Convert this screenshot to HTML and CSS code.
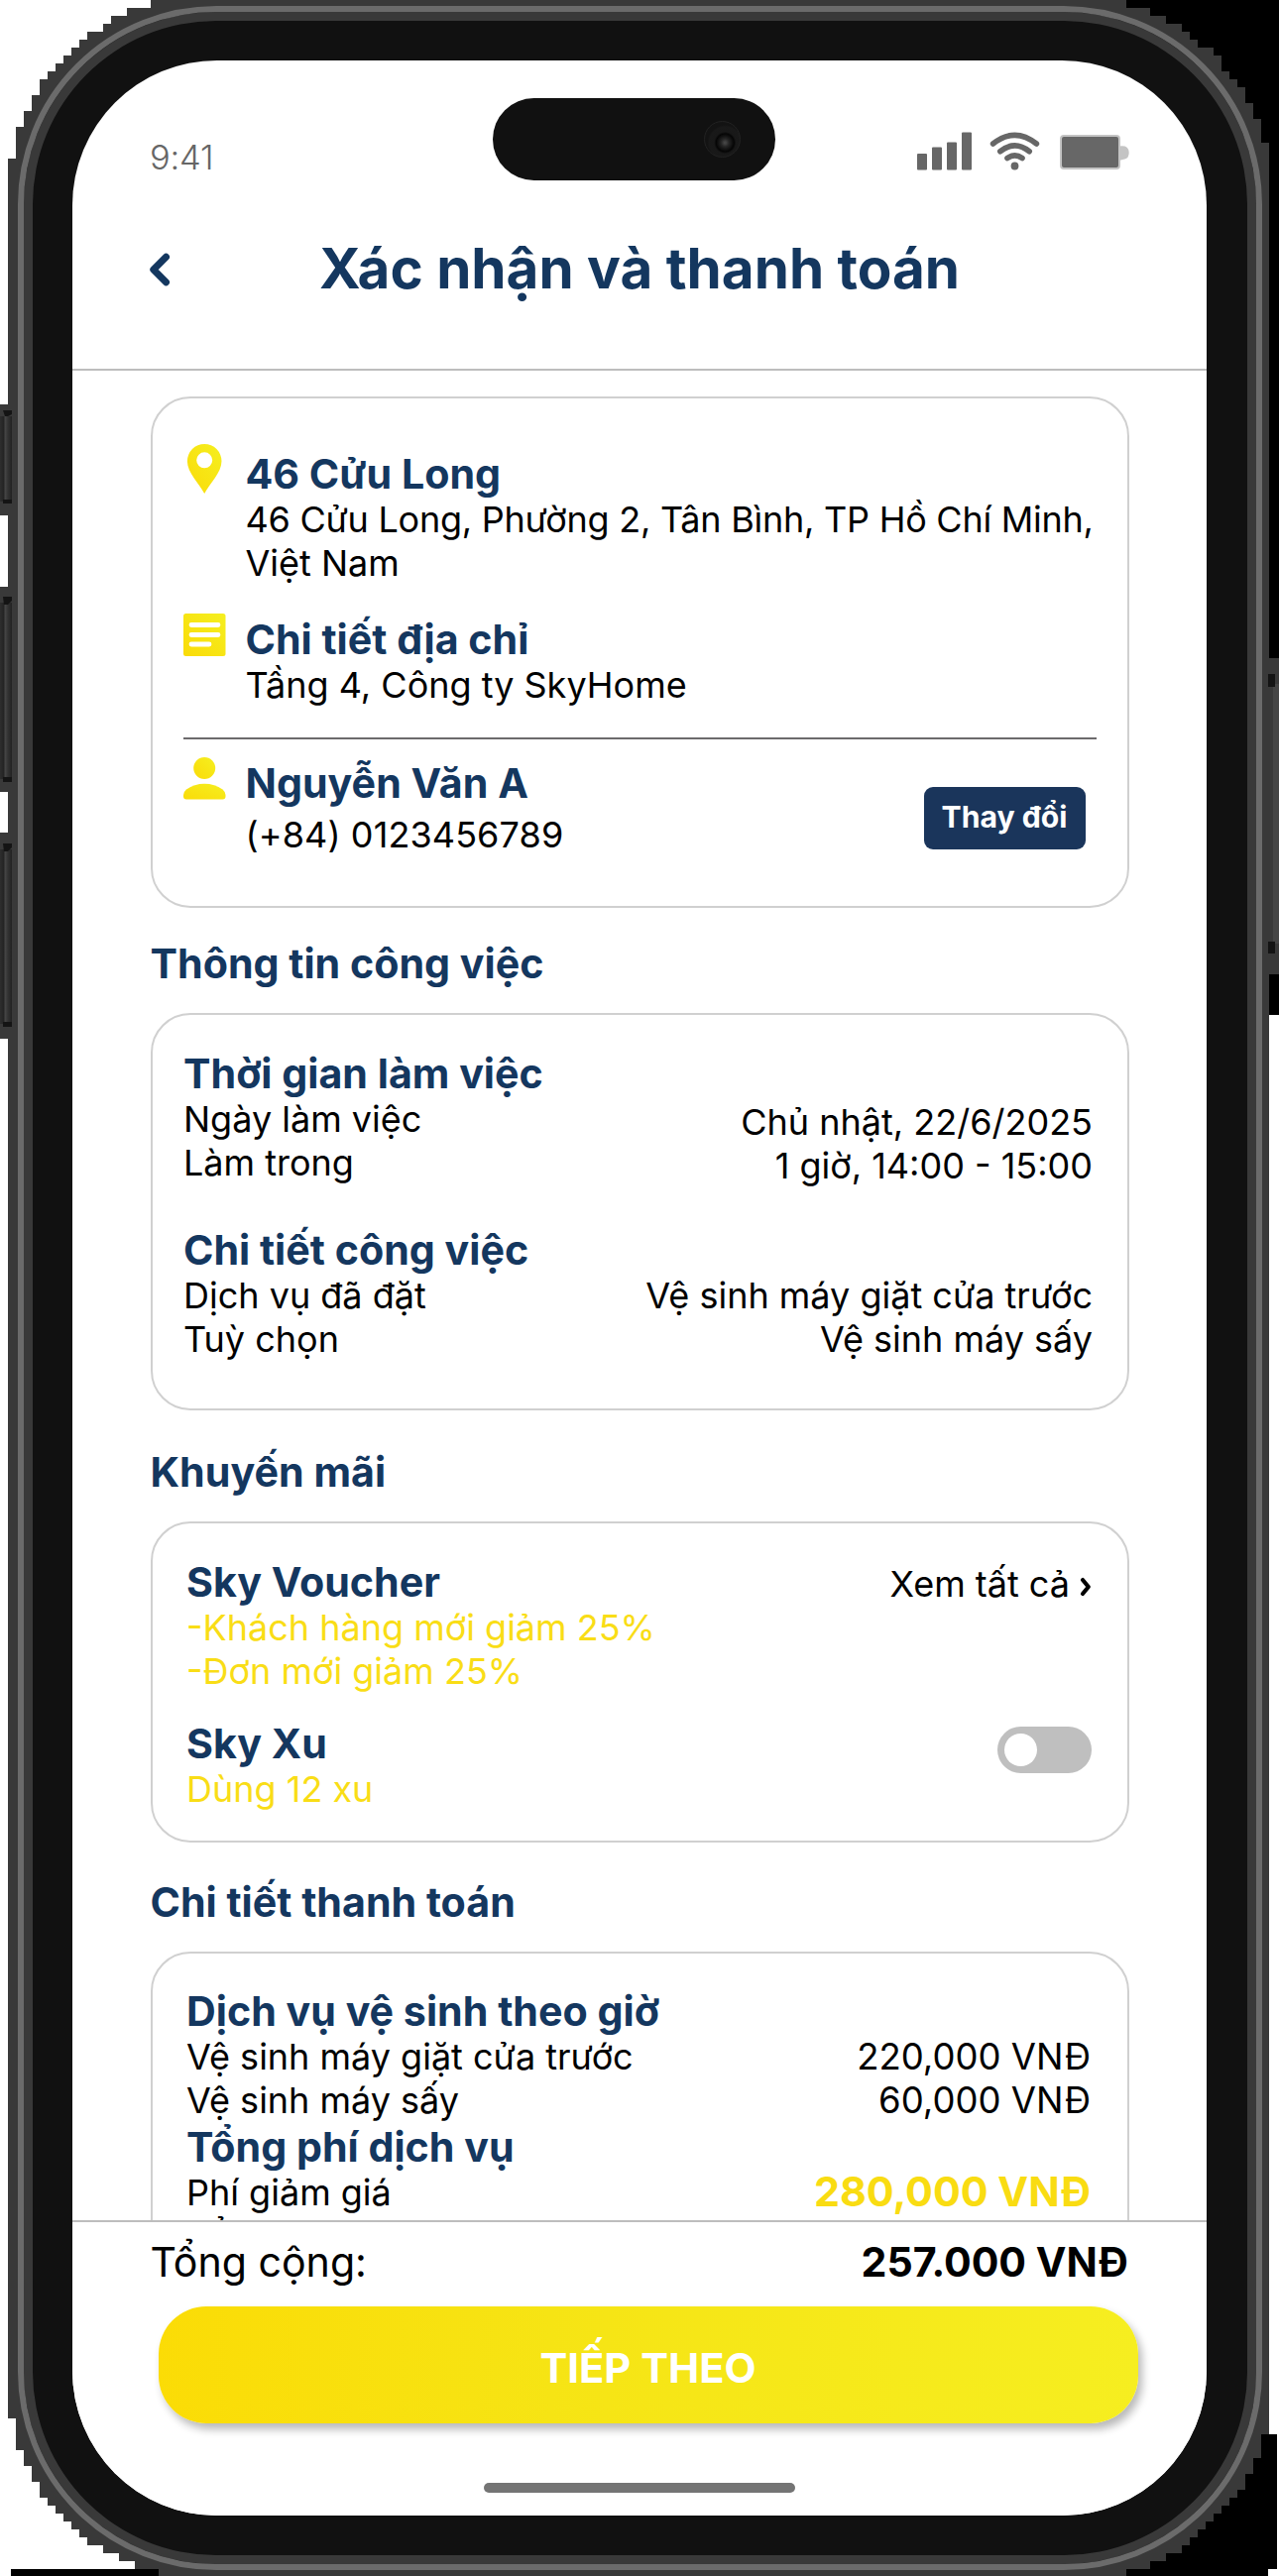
FILE: index.html
```html
<!DOCTYPE html>
<html lang="vi">
<head>
<meta charset="utf-8">
<title>Xác nhận và thanh toán</title>
<link rel="stylesheet" href="styles.css">
</head>
<body>
<svg class="backdrop" viewBox="0 0 1290 2599" width="1290" height="2599" aria-hidden="true">
  <defs>
    <linearGradient id="key" x1="0" x2="1" y1="0" y2="0">
      <stop offset="0" stop-color="#2e2e2e"/><stop offset=".3" stop-color="#242424"/><stop offset=".45" stop-color="#444"/><stop offset=".65" stop-color="#333"/><stop offset="1" stop-color="#222"/>
    </linearGradient>
  </defs>
  <rect width="1290" height="2599" fill="#fff"/>
  <path fill="#000" d="M1136 0H1290V1024H1256V300L1136 100zM1240 2456H1288V2592H1279V2599H1100V2500zM11 2592H160V2599H11z"/>
  <g shape-rendering="crispEdges" fill="#393939">
    <path d="M152 0H1136V8H1160V16H1176V24H1192V32H1200V40H1208V48H1224V56H1232V72H1240V80H1248V88H1256V104H1264V120H1272V144H1280V2456H1272V2480H1264V2496H1256V2512H1248V2520H1240V2528H1232V2536H1224V2544H1216V2552H1208V2560H1200V2568H1192V2576H1176V2584H1160V2592H1136V2599H160V2592H136V2584H120V2576H104V2568H88V2560H80V2552H72V2544H64V2536H56V2528H48V2520H40V2504H32V2488H24V2472H16V2440H8V160H16V128H24V112H32V96H40V80H48V72H56V64H64V56H72V48H80V40H88V32H104V24H112V16H128V8H152z"/>
    <path d="M0 408H12V520H0zM0 592H12V799H0zM0 840H12V1048H0zM1278 664H1290V983H1278z"/>
  </g>
  <g fill="url(#key)">
    <rect x="0" y="420" width="12" height="86"/><rect x="0" y="608" width="12" height="178"/><rect x="0" y="857" width="12" height="176"/>
  </g>
  <rect x="1284" y="690" width="6" height="262" fill="#454545"/>
  <path fill="#141414" d="M3 414H12V418L8 420H5zM3 508H12V504H3zM3 602H12V606L8 610H4zM3 789H12V784H3zM3 851H12V855L8 859H4zM3 1036H12V1031H3zM1279 680H1286V693H1279zM1279 950H1286V962H1279z"/>
</svg>
<div class="bezel">
<div class="screen">
  <header class="top">
    <div class="status">
      <span class="clock">9:41</span>
      <svg class="indicators" viewBox="0 0 216 40" width="216" height="40" fill="#676767">
        <rect x="2" y="22" width="10" height="16.5" rx="1"/><rect x="17" y="15.500" width="10" height="23" rx="1"/><rect x="32" y="10.500" width="10" height="28" rx="1"/><rect x="47" y="0.500" width="10" height="38" rx="1"/>
        <g fill="none" stroke="#676767" stroke-width="5.600" stroke-linecap="round">
          <path d="M78.600 12Q100.500-5.400 122.400 12M85.800 19.700Q100.500 8 115.200 19.700M93 26.600Q100.500 21 108 26.600"/>
        </g>
        <circle cx="100.500" cy="34.500" r="3.900"/>
        <path d="M206 14.500Q208 14 211.500 14.500Q215.700 16 215.700 21Q215.700 26.500 211.500 27.500Q208 28 206 29z" fill="#c4c4c4"/>
        <rect x="147" y="4" width="59" height="33" rx="3" stroke="#c4c4c4" stroke-width="2"/>
      </svg>
      <div class="island"><i class="lens"></i></div>
    </div>
    <div class="nav">
      <svg class="back" viewBox="0 0 24 36" width="24" height="36"><path d="M18.500 5.200L5.800 18L18.500 30.800" fill="none" stroke="#14375f" stroke-width="7" stroke-linecap="round" stroke-linejoin="round"/></svg>
      <h1>Xác nhận và thanh toán</h1>
    </div>
  </header>

  <main class="content">
    <section class="card address">
      <svg width="0" height="0" class="defs"><defs><linearGradient id="sun" x1="0" y1="1" x2="1" y2="0"><stop offset="0" stop-color="#fadb08"/><stop offset="1" stop-color="#f5ef20"/></linearGradient></defs></svg>
      <div class="entry">
        <svg class="ico pin" viewBox="0 0 43 52" width="43" height="52"><path fill="url(#sun)" fill-rule="evenodd" d="M21.200 1A17.300 17.300 0 0 0 3.900 18.300C3.900 30 16 41 21.200 51C26.400 41 38.500 30 38.500 18.300A17.300 17.300 0 0 0 21.200 1zM21.200 9.300A8 8 0 1 1 21.200 25.300A8 8 0 1 1 21.200 9.300z"/></svg>
        <div><h3>46 Cửu Long</h3><p class="street">46 Cửu Long, Phường 2, Tân Bình, TP Hồ Chí Minh,</p><p>Việt Nam</p></div>
      </div>
      <div class="entry detail">
        <svg class="ico note" viewBox="0 0 43 43" width="43" height="43"><rect width="42.500" height="43" rx="2.500" fill="url(#sun)"/><path d="M8 11.500H35M8 21.500H35M8 31H26" stroke="#fff" stroke-width="4.800" stroke-linecap="round"/></svg>
        <div><h3>Chi tiết địa chỉ</h3><p>Tầng 4, Công ty SkyHome</p></div>
      </div>
      <hr>
      <div class="entry person">
        <svg class="ico user" viewBox="0 0 43 43" width="43" height="43" fill="url(#sun)"><circle cx="21.200" cy="11" r="11"/><path d="M0 38Q0 35 3 32.500Q11 26.800 21.200 26.800Q31.500 26.800 39.500 32.500Q42.500 35 42.500 38V39.500Q42.500 42.500 39.500 42.500H3Q0 42.500 0 39.500z"/></svg>
        <div class="who"><h3>Nguyễn Văn A</h3><p class="phone">(+84) 0123456789</p></div>
        <button class="change">Thay đổi</button>
      </div>
    </section>

    <h2>Thông tin công việc</h2>
    <section class="card job">
      <h3>Thời gian làm việc</h3>
      <div class="cols"><p>Ngày làm việc<br>Làm trong</p><p class="val low">Chủ nhật, 22/6/2025<br>1 giờ, 14:00 - 15:00</p></div>
      <h3 class="second">Chi tiết công việc</h3>
      <div class="cols"><p>Dịch vụ đã đặt<br>Tuỳ chọn</p><p class="val">Vệ sinh máy giặt cửa trước<br>Vệ sinh máy sấy</p></div>
    </section>

    <h2 class="promo-title">Khuyến mãi</h2>
    <section class="card promo">
      <div class="cols">
        <div><h3>Sky Voucher</h3><p class="gold">-Khách hàng mới giảm 25%<br>-Đơn mới giảm 25%</p></div>
        <a class="all">Xem tất cả<svg viewBox="0 0 12 20" width="12" height="20"><path d="M3 3L8.800 10L3 17" fill="none" stroke="#000" stroke-width="4.200" stroke-linecap="round" stroke-linejoin="round"/></svg></a>
      </div>
      <div class="cols coins">
        <div><h3>Sky Xu</h3><p class="gold">Dùng 12 xu</p></div>
        <span class="toggle"><i></i></span>
      </div>
    </section>

    <h2 class="bill-title">Chi tiết thanh toán</h2>
    <section class="card bill">
      <h3>Dịch vụ vệ sinh theo giờ</h3>
      <div class="cols"><p>Vệ sinh máy giặt cửa trước<br>Vệ sinh máy sấy</p><p class="val money">220,000 VNĐ<br>60,000 VNĐ</p></div>
      <h3 class="fee">Tổng phí dịch vụ</h3>
      <div class="cols sum"><p>Phí giảm giá<br>Tổng</p><strong>280,000 VNĐ</strong></div>
    </section>
  </main>

  <footer class="pay">
    <div class="total"><span>Tổng cộng:</span><b>257.000 VNĐ</b></div>
    <button class="next">TIẾP THEO</button>
    <div class="home"></div>
  </footer>
</div>
</div>
</body>
</html>
```
FILE: styles.css
```css
* { box-sizing: border-box; margin: 0; padding: 0; }
body {
  width: 1290px;
  height: 2599px;
  overflow: hidden;
  padding: 6px 17px 6px 17.500px;
  font-family: Inter, "Liberation Sans", sans-serif;
  font-size: 36px;
  font-weight: 430;
  line-height: 44px;
  color: #000;
  position: relative;
}
.backdrop { position: absolute; left: 0; top: 0; z-index: -1; }

/* metal ring, dark inner ring and black bezel around the screen */
.bezel {
  width: 1255.500px;
  height: 2587px;
  border: 6px solid #6b6b6b;
  border-radius: 200px;
  background: #111;
  box-shadow: inset 0 0 0 9px #393939;
  padding: 49px 49.500px;
}
.screen {
  width: 1144px;
  height: 2477px;
  border-radius: 146px;
  background: #fff;
  overflow: hidden;
  display: flex;
  flex-direction: column;
}

.top { height: 313px; border-bottom: 2px solid #bdbdbd; flex: none; }
.status {
  position: relative;
  height: 144px;
  padding: 72px 78px 0 78px;
  display: flex;
  justify-content: space-between;
}
.clock { font-weight: 330; font-size: 34.500px; line-height: 40px; color: #666; padding-top: 6px; letter-spacing: -0.200px; }
.indicators { display: block; }
.island {
  position: absolute;
  left: 424px;
  top: 38px;
  width: 284.500px;
  height: 83px;
  border-radius: 42px;
  background: #111;
}
.lens {
  position: absolute;
  left: 213px;
  top: 23px;
  width: 37px;
  height: 37px;
  border-radius: 50%;
  border: 1px solid #222;
  background: radial-gradient(circle at 58% 60%, #444 0 1px, #252525 4px, #050505 9px, #181818 11px, #191919 16px, #131313 18px);
}
.nav { height: 167px; display: flex; align-items: flex-start; padding-left: 76px; }
.back { margin-top: 48.500px; }
h1 {
  font-size: 56.600px;
  line-height: 68px;
  font-weight: 700;
  color: #14375f;
  margin-left: 149px;
  margin-top: 32px;
  white-space: nowrap;
}

.content { height: 1866px; flex: none; overflow: hidden; padding: 26px 78px 0 78.500px; }
.card {
  width: 987px;
  border: 2px solid #d0d0d0;
  border-radius: 40px;
  background: #fff;
}
h2, h3 {
  font-size: 41.200px;
  line-height: 47px;
  font-weight: 700;
  color: #14375f;
  white-space: nowrap;
}
h2 { margin: 32.700px 0 26.300px 0; }
p { white-space: nowrap; }
.cols { display: flex; justify-content: space-between; align-items: flex-start; }
.val { text-align: right; }

.address { height: 516px; padding: 53px 31px 0; }
.defs { position: absolute; }
.entry { display: flex; }
.ico { flex: none; margin-right: 20px; }
.pin { margin-top: -8px; }
.street { letter-spacing: -0.250px; }
.detail { margin-top: 31.500px; }
.note { margin-top: -2.500px; }
hr { height: 2px; border: 0; background: #6c6a6c; margin: 31.500px 0 21px; }
.user { margin-top: -3px; }
.who { flex: 1; }
.phone { margin-top: 6px; letter-spacing: 0.100px; }
.change {
  width: 163px;
  height: 63px;
  margin: 27px 11px 0 0;
  border: 0;
  border-radius: 9px;
  background: #1a355b;
  color: #fff;
  font: 650 30.200px/36px Inter, sans-serif;
  padding-bottom: 3px;
}

.job { height: 401px; padding: 36px 34.500px 0 31.500px; }
.low { padding-top: 3px; }
.job .second { margin-top: 40px; }
.promo-title { margin-top: 39.200px; margin-bottom: 25.800px; }
.promo { height: 324px; padding: 36px 36px 0 34.500px; }
.gold { color: #f9dd16; }
.all { display: flex; align-items: flex-start; padding-top: 3.500px; gap: 9.500px; white-space: nowrap; }
.all svg { margin-top: 15px; }
.coins { margin-top: 28.300px; }
.toggle {
  width: 95px;
  height: 47px;
  margin-top: 6px;
  padding: 7px;
  border-radius: 24px;
  background: #bfbfbf;
}
.toggle i { display: block; width: 33px; height: 33px; border-radius: 50%; background: #fff; }

.bill-title { margin-top: 37.500px; margin-bottom: 25.500px; }
.bill { height: 440px; padding: 34.700px 36.500px 0 34.500px; }
.money { font-size: 36.500px; }
.fee { margin-top: 2.500px; }
.sum strong { font-size: 41.300px; line-height: 46px; font-weight: 700; color: #f9dc12; white-space: nowrap; margin-top: -2px; }

.pay {
  flex: 1;
  border-top: 2px solid #bdbdbd;
  background: #fff;
  display: flex;
  flex-direction: column;
  padding: 15px 79px 0 78.500px;
}
.total { display: flex; justify-content: space-between; line-height: 50px; font-size: 41.100px; }
.next {
  width: 988px;
  height: 118px;
  margin: 20px 0 0 8px;
  border: 0;
  border-radius: 48px;
  background: linear-gradient(90deg, #fbdc06, #f6e414 40%, #f6ee20);
  box-shadow: 4px 6px 9px rgba(0, 0, 0, .28);
  color: #fff;
  font: 700 41.700px/50px Inter, sans-serif;
  padding-top: 6px;
}
.home { width: 314px; height: 10px; border-radius: 5px; background: #747474; margin: 60px 0 0 336px; }
```
